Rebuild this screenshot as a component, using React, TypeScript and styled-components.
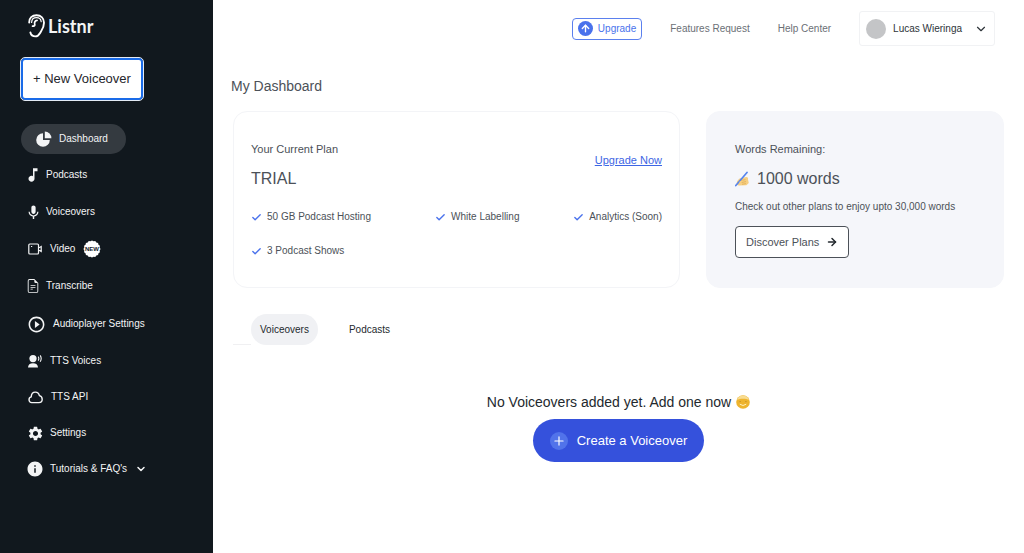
import React from "react";
import styled, { createGlobalStyle } from "styled-components";
import { MdInfo, MdMic, MdMusicNote, MdPlayCircleOutline, MdSettings } from "react-icons/md";
import { BsFileEarmarkText } from "react-icons/bs";
import { FiChevronDown, FiCheck, FiArrowRight, FiArrowUp, FiPlus } from "react-icons/fi";

const GlobalStyle = createGlobalStyle`
  *, *::before, *::after { box-sizing: border-box; }
  body {
    margin: 0;
    background: #fff;
    color: #4c5158;
    font-family: "Liberation Sans", Arial, sans-serif;
    font-size: 10px;
    line-height: 16px;
  }
  button { font: inherit; color: inherit; cursor: pointer; }
  a { color: inherit; text-decoration: none; }
  h1, h2, p, ul { margin: 0; padding: 0; font-weight: 400; }
  ul { list-style: none; }
  svg { display: block; flex: none; }
`;

const Page = styled.div`
  display: flex;
  min-height: 100vh;
`;

const Sidebar = styled.aside`
  flex: 0 0 213px;
  background: #11181e;
  color: #f3f4f5;
  padding: 14px 21px 24px;
`;

const Brand = styled.a`
  display: flex;
  align-items: center;
  gap: 3px;
  height: 24px;
  padding-left: 7px;
  font-family: Lato, "Liberation Sans", sans-serif;
  font-size: 18px;
  font-weight: 700;
`;

const NewButton = styled.button`
  display: block;
  height: 42px;
  margin: 20px 0 24px;
  padding: 0 10px;
  border: 2px solid #1a6be8;
  border-radius: 4px;
  outline: 1px solid #e4ebf5;
  background: #fff;
  color: #1f262c;
  font-size: 13px;
`;

const NavLink = styled.a<{ $active?: boolean }>`
  display: flex;
  align-items: center;
  gap: 8px;
  width: fit-content;
  padding: ${(p) => (p.$active ? "7px 18px 7px 15px" : "10px 7px")};
  margin: ${(p) => (p.$active ? "3px 0" : "0")};
  border-radius: 16px;
  background: ${(p) => (p.$active ? "#343a40" : "transparent")};
`;

const Main = styled.main`
  flex: 1;
  min-width: 0;
  padding: 11px 20px 24px;
`;

const TopBar = styled.nav`
  display: flex;
  align-items: center;
  justify-content: flex-end;
  gap: 28px;
  padding-right: 9px;
  color: #6b7076;
`;

const UpgradeButton = styled.button`
  display: flex;
  align-items: center;
  gap: 5px;
  height: 22px;
  padding: 0 5px;
  border: 1px solid #5b80ee;
  border-radius: 4px;
  background: #fff;
  color: #4a72ec;
`;

const Disc = styled.span<{ $size: number; $color: string }>`
  display: grid;
  place-items: center;
  width: ${(p) => p.$size}px;
  height: ${(p) => p.$size}px;
  border-radius: 50%;
  background: ${(p) => p.$color};
  color: #fff;
`;

const ProfileButton = styled.button`
  display: flex;
  align-items: center;
  gap: 7px;
  height: 35px;
  padding: 0 6px;
  border: 1px solid #f1f2f4;
  border-radius: 3px;
  background: #fff;
  color: #2e3439;

  svg { margin-left: 5px; }
`;

const Heading = styled.h1`
  margin: 30px 0 15px -2px;
  font-size: 14px;
  line-height: 20px;
`;

const Cards = styled.div`
  display: grid;
  grid-template-columns: 3fr 2fr;
  gap: 26px;
`;

const Card = styled.section<{ $tinted?: boolean }>`
  min-height: 175px;
  padding: ${(p) => (p.$tinted ? "28px" : "28px 17px")};
  border: 1px solid ${(p) => (p.$tinted ? "#f5f6fa" : "#f3f4f7")};
  border-radius: 14px;
  background: ${(p) => (p.$tinted ? "#f5f6fa" : "#fff")};
`;

const PlanHeader = styled.div`
  display: flex;
  align-items: flex-start;
  justify-content: space-between;
`;

const Label = styled.p`
  font-size: 11px;
  line-height: 18px;
`;

const Value = styled.h2`
  display: flex;
  align-items: center;
  gap: 8px;
  margin-top: 10px;
  font-size: 16px;
  line-height: 22px;
`;

const UpgradeLink = styled.a`
  padding-top: 12px;
  color: #3d66e4;
  font-size: 11px;
  text-decoration: underline;
`;

const Features = styled.ul`
  display: grid;
  grid-template-columns: 4fr 3fr auto;
  row-gap: 18px;
  margin-top: 19px;
`;

const Feature = styled.li`
  display: flex;
  align-items: center;
  gap: 5px;

  svg { color: #4a72ec; }
`;

const PlansNote = styled.p`
  margin: 9px 0 11px;
`;

const PlansButton = styled.button`
  display: flex;
  align-items: center;
  gap: 7px;
  height: 32px;
  padding: 0 10px;
  border: 1px solid #4c5158;
  border-radius: 4px;
  background: #fff;
  font-size: 11px;

  svg { color: #23292e; }
`;

const Tabs = styled.div`
  display: flex;
  gap: 22px;
  margin-top: 26px;

  &::before {
    content: "";
    width: 18px;
    margin-right: -22px;
    border-bottom: 1px solid #f0f0f2;
  }
`;

const Tab = styled.button<{ $active?: boolean }>`
  height: 31px;
  padding: 0 9px;
  border: 0;
  border-radius: 16px;
  background: ${(p) => (p.$active ? "#f0f1f4" : "transparent")};
  color: #23292e;
`;

const Empty = styled.section`
  display: flex;
  flex-direction: column;
  align-items: center;
  gap: 7px;
  margin-top: 47px;
  color: #23292e;
`;

const EmptyText = styled.p`
  display: flex;
  align-items: center;
  gap: 5px;
  font-size: 14px;
  line-height: 20px;
`;

const CreateButton = styled.button`
  display: flex;
  align-items: center;
  gap: 9px;
  height: 43px;
  padding: 0 17px;
  border: 0;
  border-radius: 22px;
  background: #3551dc;
  color: #fff;
  font-size: 13px;
`;

const BadgeText = styled.text`
  font: 700 6px "Liberation Sans", Arial, sans-serif;
  fill: #11181e;
`;

const EarLogo = () => (
  <svg width="17" height="24" viewBox="0 0 17 24" fill="none" stroke="#fff" strokeLinecap="round" aria-hidden="true">
    <path d="M1.200 8.500C1 4 4.200 1.200 8.500 1.200c4.500 0 7.500 3.100 7.500 7.600 0 4-1.400 6.400-3 8.700-1.500 2.300-2.400 4.900-5.600 4.900-2.600 0-4.500-1.600-5-3.900" strokeWidth="1.900" />
    <path d="M3.600 8.500c.1-3 2.200-4.800 4.900-4.800 2.600 0 4.400 1.500 4.700 4" strokeWidth="1.200" />
    <path d="M4.600 12.200c1.700 0 2.500-.9 2.100-2.300C6.300 8 7.200 6.600 9 6.300" strokeWidth="1.800" />
  </svg>
);

const PieIcon = () => (
  <svg width="16" height="16" viewBox="0 0 16 16" fill="currentColor" aria-hidden="true">
    <path d="M7 2.200V9h6.800A6.800 6.800 0 1 1 7 2.200z" />
    <path d="M8.800.6a6.600 6.600 0 0 1 6.600 6.600H8.800z" />
  </svg>
);

const VoiceIcon = () => (
  <svg width="14" height="14" viewBox="0 0 14 14" fill="currentColor" aria-hidden="true">
    <circle cx="5" cy="4.600" r="3.600" />
    <path d="M0 13.400c0-2.700 2-4.200 5-4.200s5 1.500 5 4.200z" />
    <path d="M10.200 2.600q1.300 2 0 4M12.200 1.400q2 3.200 0 6.400" fill="none" stroke="currentColor" strokeWidth="1.100" />
  </svg>
);

const CloudIcon = () => (
  <svg width="15" height="14" viewBox="0 0 15 14" fill="none" stroke="currentColor" strokeWidth="1.400" strokeLinejoin="round" aria-hidden="true">
    <path d="M3.700 12.600a2.900 2.900 0 0 1-.5-5.700C3.400 4 5 2.100 7.300 2.100c2 0 3.600 1.300 4.100 3.600 1.700.5 2.800 1.900 2.800 3.500 0 1.900-1.400 3.400-3.300 3.400z" />
  </svg>
);

const VideoIcon = () => (
  <svg width="14" height="16" viewBox="0 0 14 16" fill="none" stroke="currentColor" strokeWidth="1.200" aria-hidden="true">
    <rect x=".8" y="3" width="9.700" height="10" rx="1" />
    <path d="M10.500 6.500h1l1.700-1v5l-1.700-1h-1M3 5.500h1.200" />
  </svg>
);

const burst = Array.from({ length: 32 }, (_, i) => {
  const r = i % 2 ? 7.8 : 8.6;
  const a = (i * Math.PI) / 16;
  return `${(9 + r * Math.cos(a)).toFixed(2)},${(9 + r * Math.sin(a)).toFixed(2)}`;
}).join(" ");

const NewBadge = () => (
  <svg width="18" height="16" viewBox="0 1 18 16" overflow="visible">
    <polygon points={burst} fill="#fff" />
    <BadgeText x="9" y="11" textAnchor="middle">NEW</BadgeText>
  </svg>
);

const WritingHand = () => (
  <svg width="14" height="16" viewBox="0 0 14 16" fill="none" aria-hidden="true">
    <path d="M2 10.500c1-1.900 2.800-3.500 4.400-3.500l5-1c1.400.1 1.900 1.300 1.600 2.500l.8 3.500-2.400 2.300-7.300.3c-2-.3-2.900-1.700-2.100-4.100z" fill="#f6cf83" />
    <path d="M6 9.500l4.500-.9M6.500 11.500l4.500-.9M7 13.300l4-.7" stroke="#dda94f" strokeWidth=".7" />
    <path d="M.8 14.500L12 1.500" stroke="#5684ed" strokeWidth="1.700" strokeLinecap="round" />
    <path d="M4 10.900l4-2-2.300 3.600z" fill="#f6cf83" />
  </svg>
);

const Smiley = () => (
  <svg width="14" height="14" viewBox="0 0 14 14" fill="none" aria-hidden="true">
    <circle cx="7" cy="7" r="6.800" fill="#eeb42e" />
    <path d="M1 4.800C2 1.800 4.500.5 7 .5s5 1.300 6 4.300C10 3.300 4 3.300 1 4.800z" fill="#f8dc91" />
    <path d="M3.500 6.600h1.200M9.300 6.600h1.200" stroke="#b98324" strokeWidth=".9" />
    <path d="M3.800 9.200q3.200 2.600 6.400 0" stroke="#fff0bd" strokeWidth="1" />
  </svg>
);

/* Keeps a glyph's drawn part flush with the box that the row lays out. */
const Glyph = styled.span<{ $w: number; $h: number }>`
  display: grid;
  place-content: center;
  width: ${(p) => p.$w}px;
  height: ${(p) => p.$h}px;
`;

const navItems = [
  { label: "Dashboard", icon: <PieIcon />, w: 15, h: 16, active: true },
  { label: "Podcasts", icon: <MdMusicNote size={18} />, w: 10, h: 16 },
  { label: "Voiceovers", icon: <MdMic size={17} />, w: 10, h: 18 },
  { label: "Video", icon: <VideoIcon />, w: 14, h: 16, badge: true },
  { label: "Transcribe", icon: <BsFileEarmarkText size={14} />, w: 10, h: 18 },
  { label: "Audioplayer Settings", icon: <MdPlayCircleOutline size={19} />, w: 17, h: 18 },
  { label: "TTS Voices", icon: <VoiceIcon />, w: 14, h: 16 },
  { label: "TTS API", icon: <CloudIcon />, w: 15, h: 16 },
  { label: "Settings", icon: <MdSettings size={17} />, w: 14, h: 16 },
  { label: "Tutorials & FAQ's", icon: <MdInfo size={18} />, w: 14, h: 16, menu: true },
];

const features = ["50 GB Podcast Hosting", "White Labelling", "Analytics (Soon)", "3 Podcast Shows"];

export default function App() {
  return (
    <>
      <GlobalStyle />
      <Page>
        <Sidebar>
          <Brand href="#"><EarLogo />Listnr</Brand>
          <NewButton type="button">+ New Voiceover</NewButton>
          <ul>
            {navItems.map((item) => (
              <li key={item.label}>
                <NavLink href="#" $active={item.active}>
                  <Glyph $w={item.w} $h={item.h}>{item.icon}</Glyph>
                  {item.label}
                  {item.badge && <NewBadge />}
                  {item.menu && <FiChevronDown size={12} strokeWidth={3} />}
                </NavLink>
              </li>
            ))}
          </ul>
        </Sidebar>
        <Main>
          <TopBar>
            <UpgradeButton type="button">
              <Disc $size={15} $color="#4a72ec"><FiArrowUp size={11} strokeWidth={3} /></Disc>
              Upgrade
            </UpgradeButton>
            <a href="#">Features Request</a>
            <a href="#">Help Center</a>
            <ProfileButton type="button">
              <Disc $size={20} $color="#c4c5c7" />
              Lucas Wieringa
              <FiChevronDown size={14} />
            </ProfileButton>
          </TopBar>
          <Heading>My Dashboard</Heading>
          <Cards>
            <Card>
              <PlanHeader>
                <div>
                  <Label>Your Current Plan</Label>
                  <Value>TRIAL</Value>
                </div>
                <UpgradeLink href="#">Upgrade Now</UpgradeLink>
              </PlanHeader>
              <Features>
                {features.map((name) => (
                  <Feature key={name}><FiCheck size={11} strokeWidth={3} />{name}</Feature>
                ))}
              </Features>
            </Card>
            <Card $tinted>
              <Label>Words Remaining:</Label>
              <Value><WritingHand />1000 words</Value>
              <PlansNote>Check out other plans to enjoy upto 30,000 words</PlansNote>
              <PlansButton type="button">Discover Plans<FiArrowRight size={12} strokeWidth={3} /></PlansButton>
            </Card>
          </Cards>
          <Tabs>
            <Tab type="button" $active>Voiceovers</Tab>
            <Tab type="button">Podcasts</Tab>
          </Tabs>
          <Empty>
            <EmptyText>No Voiceovers added yet. Add one now <Smiley /></EmptyText>
            <CreateButton type="button">
              <Disc $size={18} $color="#5173ea"><FiPlus size={14} /></Disc>
              Create a Voiceover
            </CreateButton>
          </Empty>
        </Main>
      </Page>
    </>
  );
}
